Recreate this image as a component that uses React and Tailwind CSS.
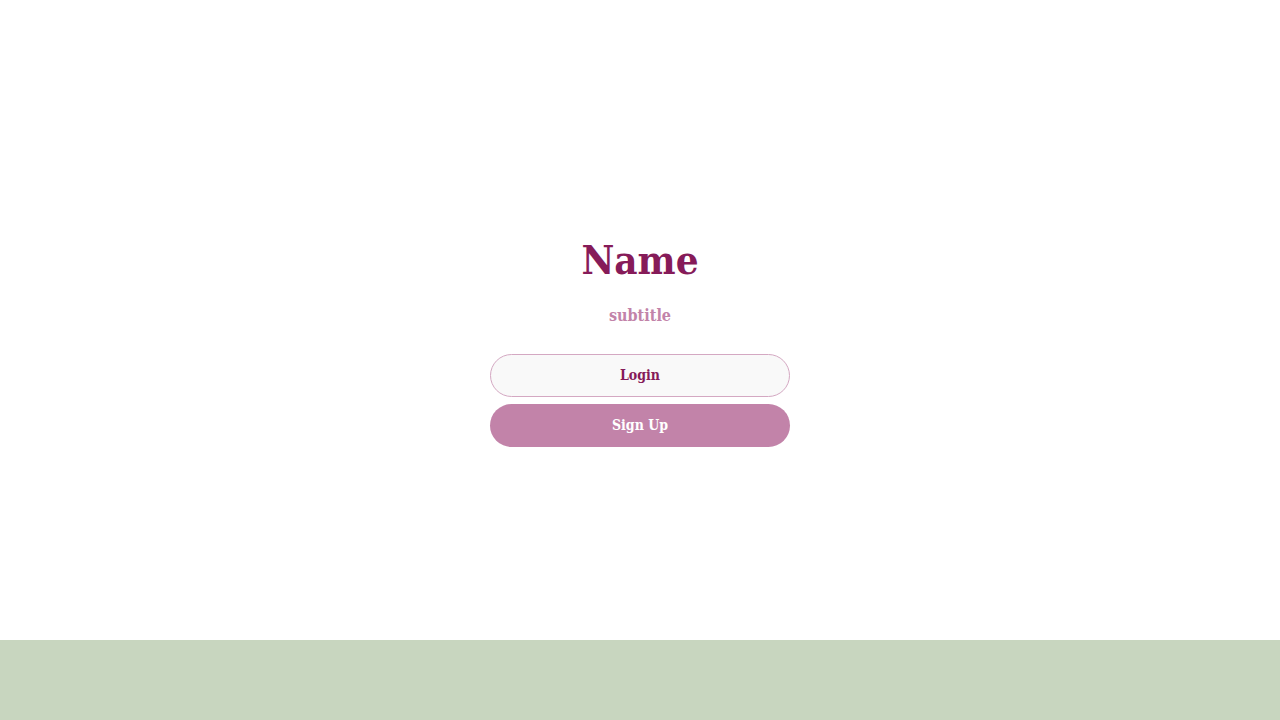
import React from 'react';

const font = { fontFamily: '"Roboto Slab", "DejaVu Serif", serif' };

const App = () => {
  return (
    <div className="w-full min-h-screen flex flex-col bg-white" style={font}>
      {/* Main area */}
      <div className="h-[640px] flex flex-col items-center pt-[236px] font-stretch-condensed">
        <h1 className="text-[40px] leading-[48px] font-bold text-[#861b59]">Name</h1>
        <p className="mt-[20px] text-[16px] leading-[24px] font-semibold text-[#c283a9]">subtitle</p>
        <div className="mt-[26px] w-[300px] flex flex-col gap-[7px]">
          <button className="h-[43px] rounded-full border border-[#d4a8c2] bg-[#f9f9f9] text-[14px] font-bold text-[#861b59] font-stretch-condensed">
            Login
          </button>
          <button className="h-[43px] rounded-full bg-[#c283a9] text-[14px] font-semibold text-white font-stretch-condensed">
            Sign Up
          </button>
        </div>
      </div>
      {/* Footer */}
      <div className="h-[80px] bg-[#c8d6bf]" />
    </div>
  );
};

export default App;
